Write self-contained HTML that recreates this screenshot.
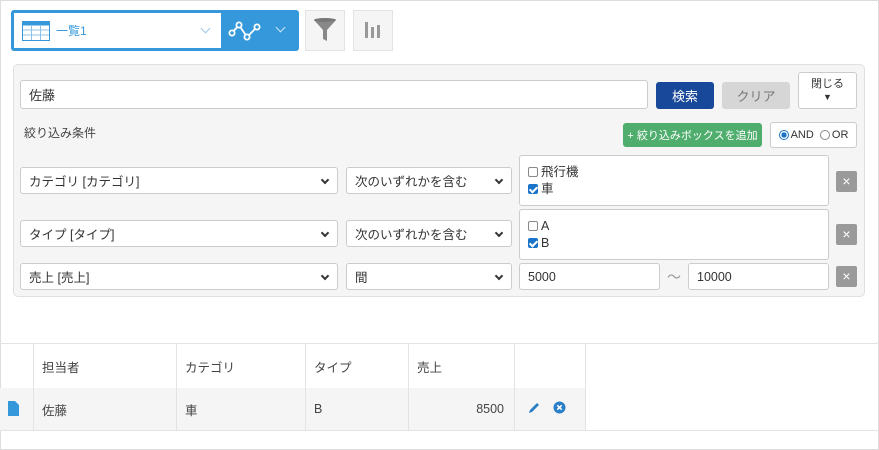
<!DOCTYPE html>
<html><head><meta charset="utf-8"><style>
*{box-sizing:border-box;margin:0;padding:0}
body{width:879px;height:450px;position:relative;background:#fff;font-family:"Liberation Sans","Noto Sans CJK JP",sans-serif;font-size:12px;color:#333;overflow:hidden}
.a{position:absolute}
.frame{left:0;top:0;width:879px;height:450px;border:1px solid #ddd}
.inp{position:absolute;background:#fff;border:1px solid #ccc;border-radius:3px;padding-left:8px;display:flex;align-items:center;font-size:12.5px;color:#333}
.sel::after{content:"";position:absolute;right:9px;top:9px;width:4px;height:4px;border-right:2px solid #333;border-bottom:2px solid #333;transform:rotate(45deg)}
.cb{display:inline-block;width:10px;height:10px;border:1px solid #888;border-radius:2px;vertical-align:-1px;margin-right:3px;background:#fff}
.cb.on{background:#1a73c8;border-color:#1a73c8;position:relative}
.cb.on::after{content:"";position:absolute;left:2px;top:0px;width:3px;height:6px;border-right:2px solid #fff;border-bottom:2px solid #fff;transform:rotate(45deg)}
.x{position:absolute;width:21px;height:21px;background:#9a9a9a;border-radius:2px;color:#fff;font-size:14px;text-align:center;line-height:20px}
.btn{position:absolute;display:flex;align-items:center;justify-content:center;border-radius:3px}
.cell{position:absolute;border-right:1px solid #e3e3e3;padding-left:8px;display:flex;align-items:center;font-size:12.5px;color:#444}
</style></head><body>
<div class="a frame"></div>
<div class="a" style="left:11px;top:10px;width:288px;height:41px;background:#3498db;border-radius:3px"></div>
<div class="a" style="left:14px;top:13px;width:207px;height:35px;background:#fff"></div>
<svg class="a" style="left:22px;top:21px" width="28" height="20" viewBox="0 0 28 20"><rect x="0.5" y="0.5" width="27" height="19" fill="#fff" stroke="#3498db"/><rect x="0.5" y="0.5" width="27" height="4" fill="#3498db"/><g stroke="#8cc0e8" stroke-width="1"><line x1="1" y1="9" x2="27" y2="9"/><line x1="1" y1="14" x2="27" y2="14"/><line x1="9.5" y1="5" x2="9.5" y2="19"/><line x1="18.5" y1="5" x2="18.5" y2="19"/></g></svg>
<div class="a" style="left:56px;top:22px;color:#3498db;font-size:12px">一覧1</div>
<div class="a" style="left:202px;top:25px;width:7px;height:7px;border-right:1.5px solid #9bc6e6;border-bottom:1.5px solid #9bc6e6;transform:rotate(45deg)"></div>
<svg class="a" style="left:228px;top:19px" width="36" height="24" viewBox="0 0 36 24"><polyline points="4,14 11,6 19,18 29,8" fill="none" stroke="#fff" stroke-width="1.8"/><g fill="#3498db" stroke="#fff" stroke-width="1.8"><circle cx="4" cy="14" r="2.6"/><circle cx="11" cy="6" r="2.6"/><circle cx="19" cy="18" r="2.6"/><circle cx="29" cy="8" r="2.6"/></g></svg>
<div class="a" style="left:277px;top:24px;width:7px;height:7px;border-right:1.5px solid #cfe5f6;border-bottom:1.5px solid #cfe5f6;transform:rotate(45deg)"></div>
<div class="a" style="left:305px;top:10px;width:40px;height:41px;background:#f5f5f5;border:1px solid #e3e3e3"></div>
<svg class="a" style="left:313px;top:17px" width="24" height="26" viewBox="0 0 24 26"><path d="M1 3 H23 L14 13 V24 L10 22 V13 Z" fill="#888"/><ellipse cx="12" cy="3" rx="11" ry="2" fill="#777"/></svg>
<div class="a" style="left:353px;top:10px;width:40px;height:41px;background:#f5f5f5;border:1px solid #e3e3e3"></div>
<svg class="a" style="left:364px;top:20px" width="18" height="20"><rect x="1" y="2" width="3" height="16" fill="#999"/><rect x="7" y="7" width="3" height="11" fill="#999"/><rect x="13" y="5" width="3" height="13" fill="#999"/></svg>
<div class="a" style="left:13px;top:64px;width:852px;height:233px;background:#f5f5f5;border:1px solid #e0e0e0;border-radius:5px"></div>
<div class="inp" style="left:20px;top:80px;width:628px;height:29px;font-size:13px">佐藤</div>
<div class="btn" style="left:656px;top:82px;width:58px;height:27px;background:#17489a;color:#fff;font-size:13px">検索</div>
<div class="btn" style="left:722px;top:82px;width:68px;height:27px;background:#d6d6d6;color:#777;font-size:13px">クリア</div>
<div class="btn" style="left:798px;top:72px;width:59px;height:37px;background:#fff;border:1px solid #ccc;flex-direction:column;font-size:11px;line-height:13px">閉じる<span style="font-size:9px">▼</span></div>
<div class="a" style="left:24px;top:124px;font-size:12px;color:#444">絞り込み条件</div>
<div class="btn" style="left:623px;top:123px;width:139px;height:24px;background:#4fae6d;color:#fff;font-size:11px">+ 絞り込みボックスを追加</div>
<div class="btn" style="left:770px;top:122px;width:87px;height:26px;background:#fff;border:1px solid #ccc;font-size:11px"><span style="display:inline-block;width:10px;height:10px;border-radius:50%;border:1px solid #1a73c8;background:radial-gradient(#1a73c8 45%,#fff 50%);margin-right:2px"></span>AND&nbsp;&nbsp;<span style="display:inline-block;width:10px;height:10px;border-radius:50%;border:1px solid #888;margin-right:2px"></span>OR</div>
<div class="inp sel" style="left:20px;top:167px;width:318px;height:27px">カテゴリ [カテゴリ]</div>
<div class="inp sel" style="left:346px;top:167px;width:166px;height:27px">次のいずれかを含む</div>
<div class="inp" style="left:519px;top:155px;width:310px;height:51px;flex-direction:column;align-items:flex-start;justify-content:center;line-height:17px"><div><span class="cb"></span>飛行機</div><div><span class="cb on"></span>車</div></div>
<div class="x" style="left:836px;top:171px">×</div>
<div class="inp sel" style="left:20px;top:220px;width:318px;height:27px">タイプ [タイプ]</div>
<div class="inp sel" style="left:346px;top:220px;width:166px;height:27px">次のいずれかを含む</div>
<div class="inp" style="left:519px;top:209px;width:310px;height:51px;flex-direction:column;align-items:flex-start;justify-content:center;line-height:17px"><div><span class="cb"></span>A</div><div><span class="cb on"></span>B</div></div>
<div class="x" style="left:836px;top:224px">×</div>
<div class="inp sel" style="left:20px;top:263px;width:318px;height:27px">売上 [売上]</div>
<div class="inp sel" style="left:346px;top:263px;width:166px;height:27px">間</div>
<div class="inp" style="left:519px;top:263px;width:141px;height:27px">5000</div>
<div class="a" style="left:667px;top:267px;color:#999;font-size:14px">～</div>
<div class="inp" style="left:688px;top:263px;width:141px;height:27px">10000</div>
<div class="x" style="left:836px;top:266px">×</div>
<div class="a" style="left:0;top:343px;width:879px;border-top:1px solid #e3e3e3"></div>
<div class="a" style="left:0;top:430px;width:879px;border-top:1px solid #e3e3e3"></div>
<div class="a" style="left:0;top:388px;width:585px;height:42px;background:#f5f5f5"></div>
<div class="cell" style="left:0;top:344px;width:34px;height:86px"></div>
<div class="cell" style="left:34px;top:344px;width:143px;height:44px">担当者</div>
<div class="cell" style="left:177px;top:344px;width:129px;height:44px">カテゴリ</div>
<div class="cell" style="left:306px;top:344px;width:103px;height:44px">タイプ</div>
<div class="cell" style="left:409px;top:344px;width:106px;height:44px">売上</div>
<div class="cell" style="left:515px;top:344px;width:71px;height:86px"></div>
<div class="cell" style="left:34px;top:388px;width:143px;height:42px">佐藤</div>
<div class="cell" style="left:177px;top:388px;width:129px;height:42px">車</div>
<div class="cell" style="left:306px;top:388px;width:103px;height:42px">B</div>
<div class="cell" style="left:409px;top:388px;width:106px;height:42px;justify-content:flex-end;padding-right:10px">8500</div>
<svg class="a" style="left:8px;top:401px" width="12" height="15"><path d="M0 0 H7 L11 4 V15 H0 Z" fill="#3498db"/></svg>
<svg class="a" style="left:527px;top:401px" width="14" height="14"><path d="M2 12 L3 9 L10 2 L12 4 L5 11 Z" fill="#2a7fc8"/></svg>
<svg class="a" style="left:553px;top:401px" width="13" height="13"><circle cx="6.5" cy="6.5" r="6" fill="#2a7fc8"/><path d="M4.3 4.3 L8.7 8.7 M8.7 4.3 L4.3 8.7" stroke="#fff" stroke-width="1.6"/></svg>
</body></html>
